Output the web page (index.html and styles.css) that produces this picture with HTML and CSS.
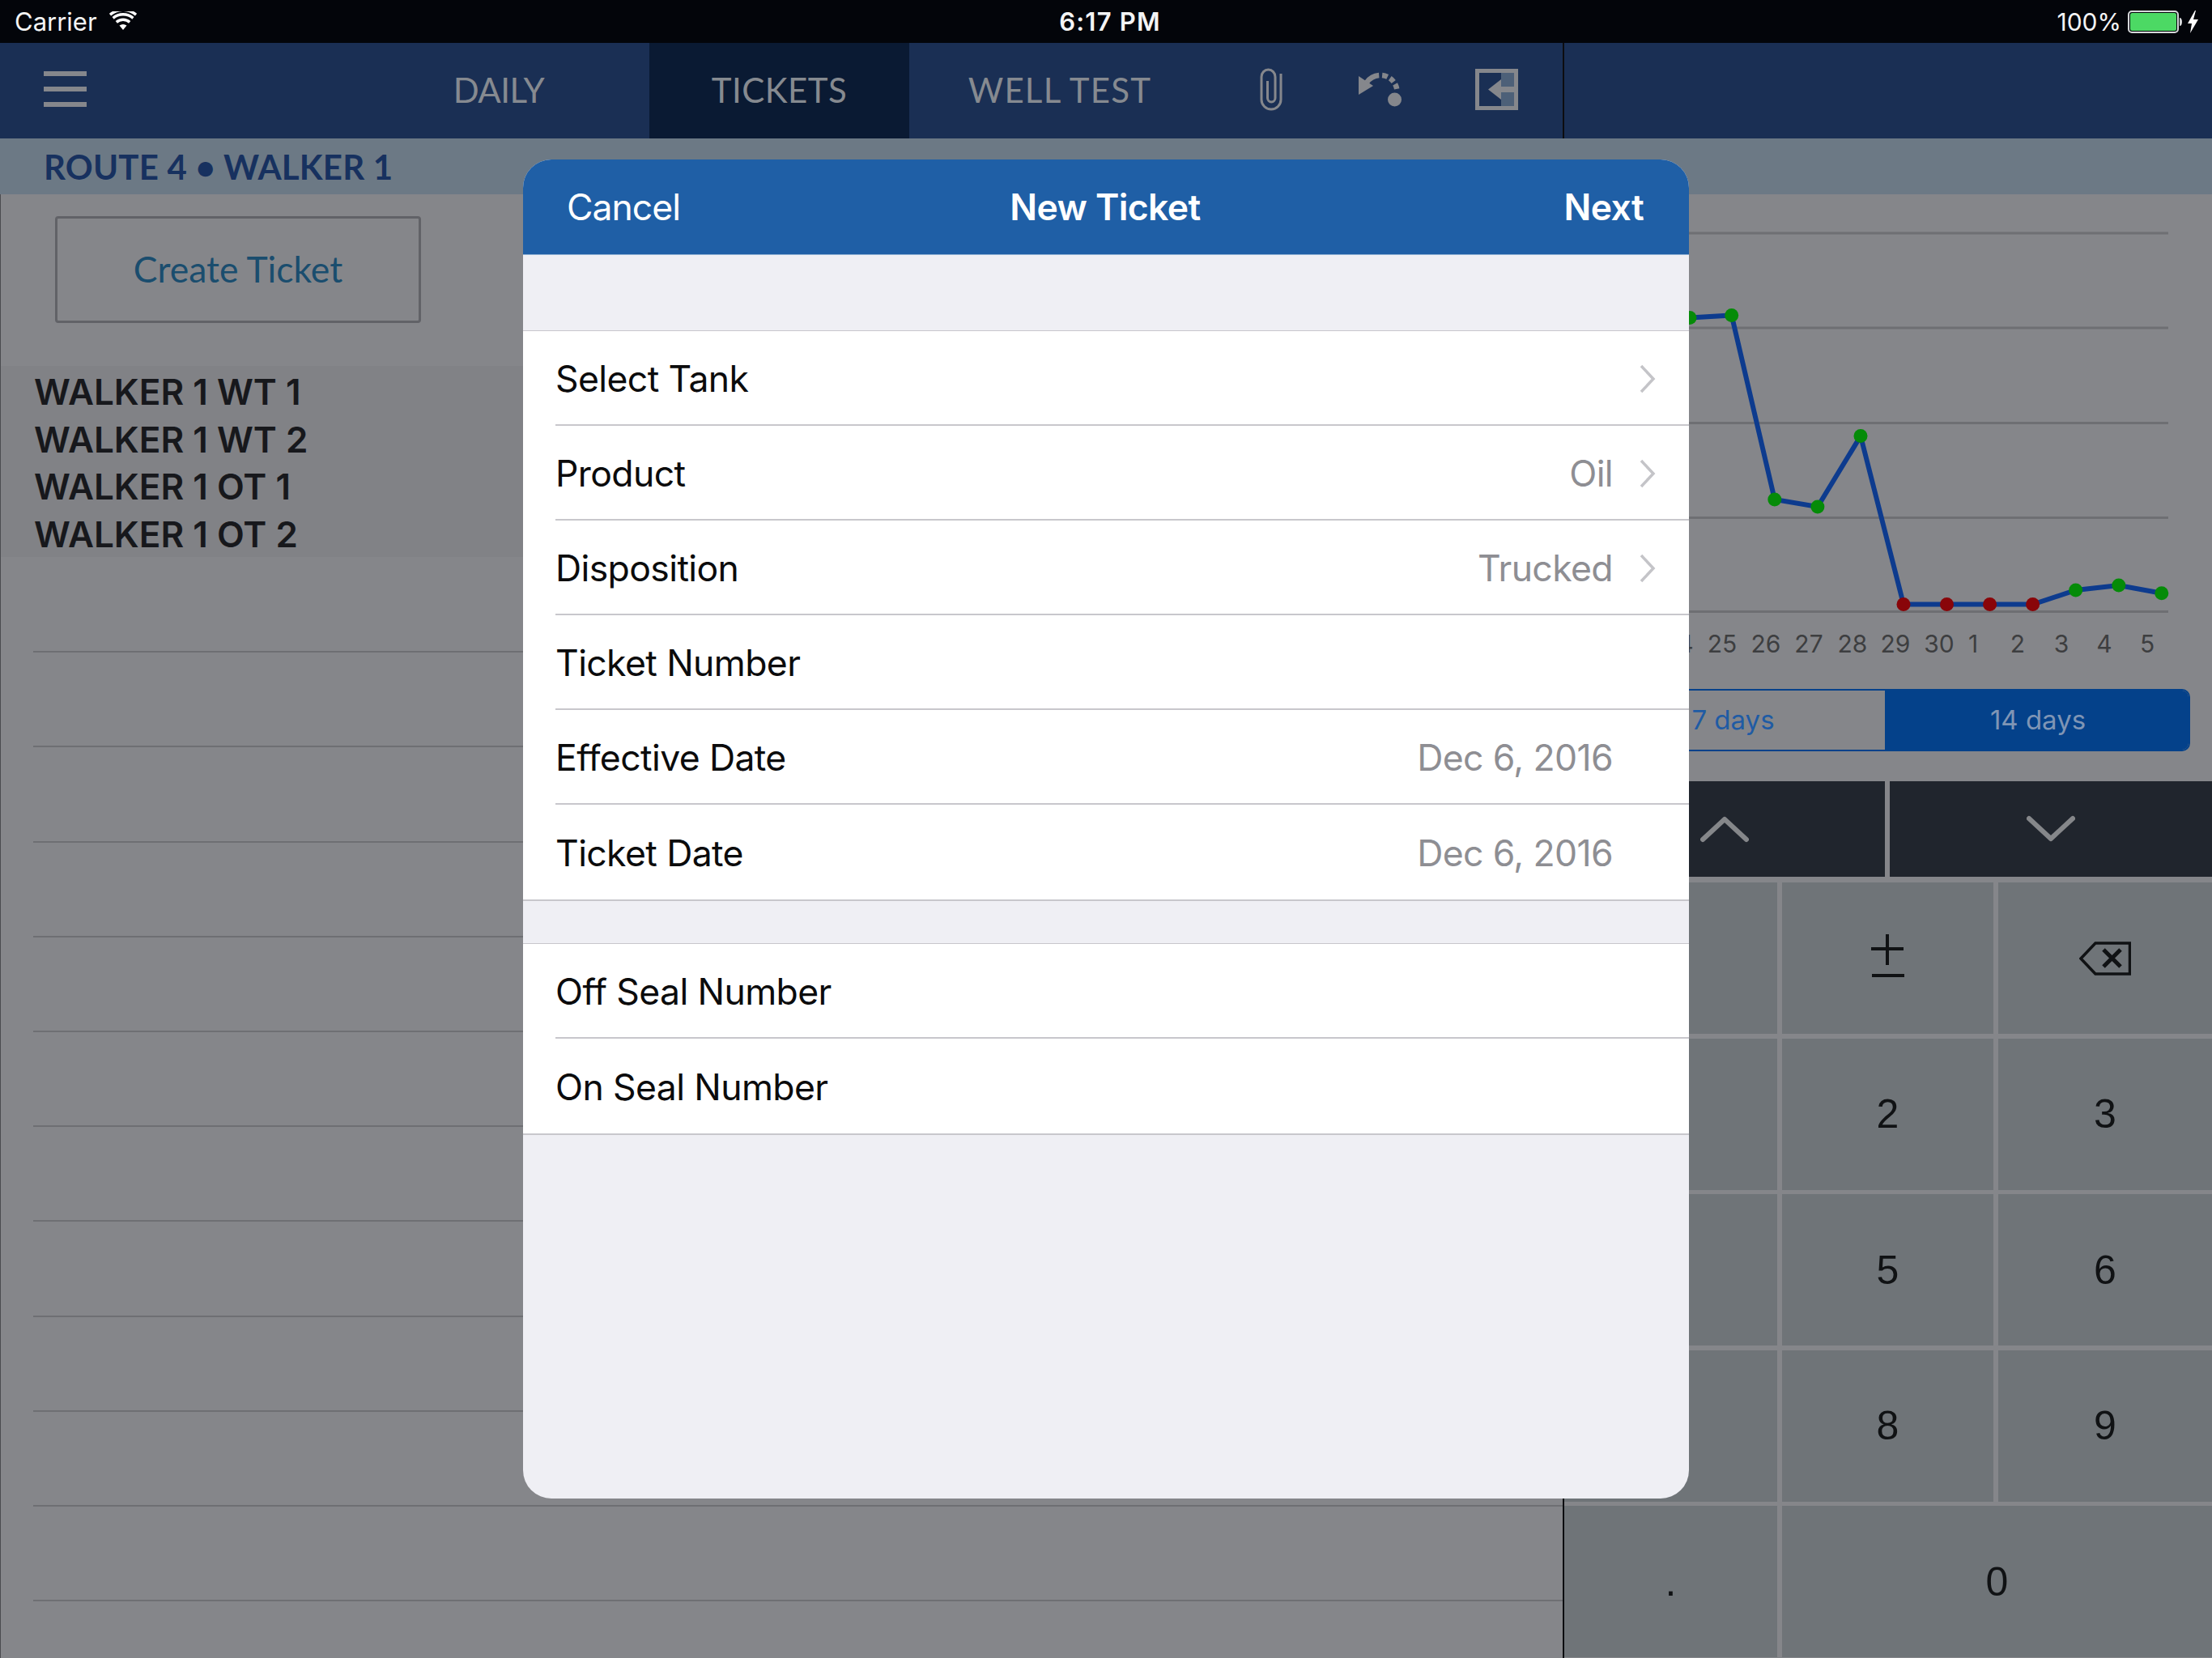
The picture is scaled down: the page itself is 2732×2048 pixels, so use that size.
FILE: index.html
```html
<!DOCTYPE html>
<html lang="en">
<head>
<meta charset="utf-8">
<title>New Ticket</title>
<link rel="stylesheet" href="styles.css">
</head>
<body>
<div class="app">
  <header class="status">
    <div class="status-left"><span>Carrier</span>
      <svg class="wifi" viewBox="0 0 34 24"><path d="M17 23 12.500 17.600a7 7 0 0 1 9 0Z" fill="#fff"/><path d="M8.800 13.400a12.400 12.400 0 0 1 16.400 0M4.600 8.400a19 19 0 0 1 24.800 0M1 4.200A24.600 24.600 0 0 1 33 4.200" fill="none" stroke="#fff" stroke-width="3.400"/></svg>
    </div>
    <div class="status-time">6:17 PM</div>
    <div class="status-right"><span>100%</span>
      <svg class="battery" viewBox="0 0 90 28"><rect x="1" y="1" width="61" height="26" rx="4" fill="none" stroke="#d6d8da" stroke-width="2"/><rect x="3" y="3" width="57" height="22" rx="2.500" fill="#4cd964"/><path d="M64 9c2 0 3 2 3 5s-1 5-3 5Z" fill="#d6d8da"/><path d="M83 0 74 16h5l-2 12 10-17h-6l3-11Z" fill="#fff"/></svg>
    </div>
  </header>

  <nav class="nav">
    <div class="nav-main">
      <div class="burger"><i></i><i></i><i></i></div>
      <div class="tabs">
        <div class="tab tab-daily">DAILY</div>
        <div class="tab tab-tickets">TICKETS</div>
        <div class="tab tab-well">WELL TEST</div>
      </div>
      <svg class="ic-clip" viewBox="0 0 30 53"><path d="M27 7V39A12 12 0 0 1 3 39V11A8.500 9 0 0 1 20 11V37A4.750 5 0 0 1 10.500 37V16" fill="none" stroke="#85878c" stroke-width="3"/></svg>
      <svg class="ic-gauge" viewBox="0 0 53 43"><path d="M0 5 18 17 0 28Z" fill="#85878c"/><path d="M10.200 12.700A20.500 20.500 0 0 1 25.200 4.100M29.100 4.100A20.500 20.500 0 0 1 35.700 5.900M38.800 7.700A20.500 20.500 0 0 1 43.200 11.900M45.100 14.900A20.500 20.500 0 0 1 47.200 20.900" fill="none" stroke="#85878c" stroke-width="6.500"/><circle cx="44.500" cy="34" r="8.500" fill="#85878c"/></svg>
      <svg class="ic-exit" viewBox="0 0 53 51"><path d="M32 5H48V22H32ZM32 29H48V46H32Z" fill="#4d6078"/><path d="M0 0H53V51H0ZM5 5V46H48V5Z" fill="#85878c" fill-rule="evenodd"/><path d="M16 25.500 32 13V22H48V29H32V38Z" fill="#85878c"/></svg>
    </div>
    <div class="nav-side"></div>
  </nav>

  <div class="route">ROUTE 4 • WALKER 1</div>

  <main class="split">
    <section class="left">
      <div class="create-wrap"><div class="create">Create Ticket</div></div>
      <ul class="wells">
        <li>WALKER 1 WT 1</li>
        <li>WALKER 1 WT 2</li>
        <li>WALKER 1 OT 1</li>
        <li>WALKER 1 OT 2</li>
      </ul>
      <div class="rules">
        <div></div><div></div><div></div><div></div><div></div><div></div><div></div><div></div><div></div><div></div><div></div>
      </div>
    </section>

    <section class="right">
      <svg class="chart" viewBox="2 0 800 610">
        <g class="grid">
          <path d="M22 48H748M22 165H748M22 282.500H748M22 399.500H748M22 515.500H748"/>
        </g>
        <polyline class="series" points="105,155 157,152.500 208.700,149.500 261.800,377 314.900,386 368,298.600 421,506.600 474.500,506.600 527.600,506.600 580.600,506.600 633.700,489 686.800,483 739.800,492.800"/>
        <g class="good">
          <circle cx="105" cy="155" r="8.500"/><circle cx="157" cy="152.500" r="8.500"/><circle cx="208.700" cy="149.500" r="8.500"/><circle cx="261.800" cy="377" r="8.500"/><circle cx="314.900" cy="386" r="8.500"/><circle cx="368" cy="298.600" r="8.500"/><circle cx="633.700" cy="489" r="8.500"/><circle cx="686.800" cy="483" r="8.500"/><circle cx="739.800" cy="492.800" r="8.500"/>
        </g>
        <g class="bad">
          <circle cx="421" cy="506.600" r="8.500"/><circle cx="474.500" cy="506.600" r="8.500"/><circle cx="527.600" cy="506.600" r="8.500"/><circle cx="580.600" cy="506.600" r="8.500"/>
        </g>
        <g class="labels">
          <text x="143" y="566">24</text><text x="197" y="566">25</text><text x="251" y="566">26</text><text x="304" y="566">27</text><text x="358" y="566">28</text><text x="411" y="566">29</text><text x="465" y="566">30</text><text x="507" y="566">1</text><text x="562" y="566">2</text><text x="616" y="566">3</text><text x="669" y="566">4</text><text x="722" y="566">5</text>
        </g>
      </svg>
      <div class="segmented">
        <div class="seg">7 days</div>
        <div class="seg seg-on">14 days</div>
      </div>
      <div class="keyboard">
        <div class="kb-bar">
          <div class="kb-btn"><svg class="chev" viewBox="0 0 60 34"><path d="M3 30 30 5l27 25" /></svg></div>
          <div class="kb-btn"><svg class="chev" viewBox="0 0 60 34"><path d="M3 4l27 25L57 4" /></svg></div>
        </div>
        <div class="keys">
          <div class="key"></div>
          <div class="key"><svg class="ic-pm" viewBox="0 0 42 54"><path d="M20 0V38M0 18H40M1 51H41"/></svg></div>
          <div class="key"><svg class="ic-bs" viewBox="0 0 64 42"><path d="M62.500 2H20L2 21 20 40H62.500Z"/><path d="M30 10 51 31M51 10 30 31" class="x"/></svg></div>
          <div class="key">1</div><div class="key">2</div><div class="key">3</div>
          <div class="key">4</div><div class="key">5</div><div class="key">6</div>
          <div class="key">7</div><div class="key">8</div><div class="key">9</div>
          <div class="key">.</div><div class="key key-wide">0</div>
        </div>
      </div>
    </section>
  </main>

  <div class="modal">
    <div class="modal-head">
      <span class="mh-btn">Cancel</span>
      <span class="mh-title">New Ticket</span>
      <span class="mh-next">Next</span>
    </div>
    <div class="group group-first">
      <div class="row"><span>Select Tank</span><svg class="disc" viewBox="0 0 20 36"><path d="M2 2 17 18 2 34"/></svg></div>
      <div class="row"><span>Product</span><em>Oil</em><svg class="disc" viewBox="0 0 20 36"><path d="M2 2 17 18 2 34"/></svg></div>
      <div class="row"><span>Disposition</span><em>Trucked</em><svg class="disc" viewBox="0 0 20 36"><path d="M2 2 17 18 2 34"/></svg></div>
      <div class="row"><span>Ticket Number</span></div>
      <div class="row row-date"><span>Effective Date</span><em>Dec 6, 2016</em></div>
      <div class="row row-date"><span>Ticket Date</span><em>Dec 6, 2016</em></div>
    </div>
    <div class="group group-second">
      <div class="row"><span>Off Seal Number</span></div>
      <div class="row"><span>On Seal Number</span></div>
    </div>
  </div>
</div>
</body>
</html>
```
FILE: styles.css
```css
* { box-sizing: border-box; }
html, body { margin: 0; padding: 0; }
body { width: 2732px; height: 2048px; overflow: hidden; background: #85868a; font-family: Inter, "Liberation Sans", sans-serif; }
.app { position: relative; width: 2732px; height: 2048px; display: flex; flex-direction: column; }

.status { height: 53px; background: #03050a; color: #f4f4f5; display: grid; grid-template-columns: 1fr auto 1fr; align-items: center; font-size: 30px; padding: 0 14px 0 18px; }
.status-left { display: flex; align-items: center; gap: 15px; font-size: 31px; }
.wifi { width: 34px; height: 24px; margin-top: -2px; }
.status-time { font-weight: 600; font-size: 31px; letter-spacing: 1.200px; margin-left: 6px; }
.status-right { display: flex; justify-content: flex-end; align-items: center; gap: 8px; }
.battery { width: 90px; height: 28px; }

.nav { height: 118px; display: flex; background: #1a2f54; }
.nav-main { width: 1930px; display: flex; align-items: center; }
.nav-side { flex: 1; border-left: 2px solid #0c0d10; }
.burger { width: 53px; margin: 0 0 5px 54px; display: flex; flex-direction: column; gap: 13px; }
.burger i { display: block; height: 6px; background: #85878c; }
.tabs { display: flex; align-self: stretch; margin-left: 348px; font-family: Lato, sans-serif; font-size: 42px; color: #868a90; }
.tab { display: flex; align-items: center; justify-content: center; padding-bottom: 3px; }
.tab-daily { width: 347px; padding-right: 25px; letter-spacing: -0.500px; }
.tab-tickets { width: 321px; background: #0a1a33; letter-spacing: 0.500px; }
.tab-well { width: 372px; letter-spacing: 1.200px; }
.ic-clip { width: 30px; height: 53px; margin: 0 0 3px 60px; }
.ic-gauge { width: 53px; height: 43px; margin: 0 0 3px 93px; }
.ic-exit { width: 53px; height: 51px; margin: 0 0 3px 91px; }

.route { height: 69px; background: #6c7985; color: #17315f; display: flex; align-items: center; padding-left: 54px; font-family: Lato, sans-serif; font-weight: 700; font-size: 42px; letter-spacing: 0.200px; }

.split { flex: 1; display: flex; min-height: 0; }
.left { width: 1930px; border-left: 1px solid #4b4c50; }
.create-wrap { height: 212px; padding: 27px 0 0 67px; }
.create { width: 452px; height: 132px; padding-bottom: 3px; border: 3px solid #616267; border-radius: 4px; display: flex; align-items: center; justify-content: center; font-family: Lato, sans-serif; font-size: 44.500px; color: #1a4d6e; }
.wells { list-style: none; margin: 0; padding: 3px 0 0 41px; height: 236px; background: #818286; color: #17181c; font-size: 44px; font-weight: 600; }
.wells li { height: 58.600px; line-height: 58.600px; }
.rules { margin: 1px 0 0 40px; }
.rules div { height: 117.200px; border-bottom: 2px solid #6e6f73; }

.right { flex: 1; display: flex; flex-direction: column; border-left: 2px solid #0c0d10; min-width: 0; }
.chart { width: 800px; height: 610px; display: block; flex: none; }
.grid path { fill: none; stroke: #6e6f73; stroke-width: 3; }
.series { fill: none; stroke: #0d3b8e; stroke-width: 6; }
.good { fill: #058b08; }
.bad { fill: #890509; }
.labels text { font-family: Inter, sans-serif; font-size: 30px; fill: #3d3e40; text-anchor: middle; }

.segmented { position: absolute; left: 1951px; top: 851px; width: 754px; height: 77px; display: flex; border: 2px solid #04418a; border-radius: 10px; overflow: hidden; font-size: 33px; color: #1f5ba4; }
.seg { flex: 0 0 50%; display: flex; align-items: center; justify-content: center; padding-bottom: 2px; }
.seg-on { background: #04418a; color: #7f95b5; padding-left: 3px; }

.keyboard { position: absolute; left: 1932px; top: 965px; width: 800px; height: 1083px; display: flex; flex-direction: column; }
.kb-bar { height: 118px; display: grid; grid-template-columns: 396px 1fr; gap: 6px; flex: none; }
.kb-btn { background: #20252d; display: flex; align-items: center; justify-content: center; }
.chev { width: 60px; height: 34px; }
.chev path { fill: none; stroke: #85878a; stroke-width: 6; stroke-linecap: round; stroke-linejoin: round; }
.keys { flex: 1; margin-top: 7px; display: grid; grid-template-columns: 263px 261px 264px; grid-auto-rows: 187px; column-gap: 6px; row-gap: 5.500px; }
.key { background: #6f7478; display: flex; align-items: center; justify-content: center; font-family: "Liberation Sans", sans-serif; font-size: 50px; color: #101214; }
.key-wide { grid-column: span 2; }
.ic-pm { width: 42px; height: 54px; margin-top: -6px; }
.ic-pm path { fill: none; stroke: #101214; stroke-width: 4; }
.ic-bs { width: 64px; height: 42px; }
.ic-bs path { fill: none; stroke: #101214; stroke-width: 3.500; }
.ic-bs .x { stroke-width: 5; }

.modal { position: absolute; left: 646px; top: 197px; width: 1440px; height: 1654px; background: #efeff4; border-radius: 35px; overflow: hidden; }
.modal-head { height: 118px; background: #1f5fa6; color: #fff; font-size: 44.500px; letter-spacing: -0.600px; display: grid; grid-template-columns: 1fr auto 1fr; align-items: center; padding: 0 56px 0 54px; border-bottom: 1px solid #8fb0d3; }
.mh-btn { letter-spacing: -1px; }
.mh-title { font-weight: 600; }
.mh-next { justify-self: end; font-weight: 600; }
.group { background: #fff; border-top: 1px solid #c8c7cc; border-bottom: 2px solid #c8c7cc; }
.group-first { margin-top: 93px; }
.group-second { margin-top: 52px; }
.row { height: 117px; margin-left: 40px; padding-top: 2px; display: flex; align-items: center; font-size: 44.500px; letter-spacing: -0.600px; color: #0b0b0c; padding-right: 41px; border-bottom: 2px solid #c8c7cc; }
.row:last-child { border-bottom: 0; }
.row span { flex: 1; }
.row em { font-style: normal; color: #8e8e93; }
.row-date em { margin-right: 53px; }
.disc { width: 20px; height: 36px; margin-left: 33px; }
.disc path { fill: none; stroke: #c4c4c8; stroke-width: 3.500; }
```
